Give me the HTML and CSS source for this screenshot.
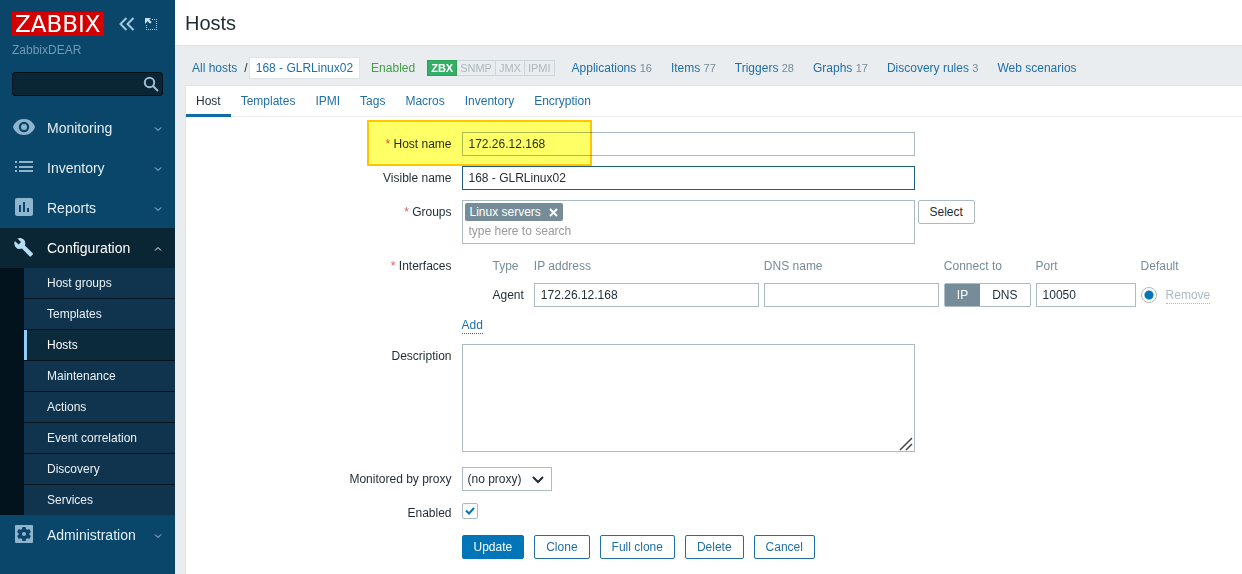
FILE: index.html
```html
<!DOCTYPE html>
<html lang="en">
<head>
    <meta charset="UTF-8">
    <meta name="viewport" content="width=device-width, initial-scale=1.0">
    <title>Configuration of hosts</title>
    <link rel="stylesheet" href="styles.css">
</head>
<body>
    <aside class="sidebar">
        <div class="sidebar-header">
            <a class="logo" href="#">ZABBIX</a>
            <button class="icon-button" type="button" aria-label="Collapse sidebar">
                <svg width="16" height="14" viewBox="0 0 16 14"><path d="M7.500 1L1.500 7l6 6M14.500 1l-6 6 6 6"/></svg>
            </button>
            <button class="icon-button" type="button" aria-label="Hide sidebar">
                <svg width="13" height="13" viewBox="0 0 13 13">
                    <path class="dotted" d="M7 1.500h5.500M11.500 3v9M1.500 7v5.500M3 11.500h8"/>
                    <path class="solid" d="M0 0h6L4.300 1.700l2.400 2.400-1.600 1.600-2.400-2.400L0 6z"/>
                </svg>
            </button>
        </div>
        <div class="server-name">ZabbixDEAR</div>
        <form class="search" role="search">
            <input type="text" id="search" aria-label="Search">
            <button type="button" aria-label="Search">
                <svg width="16" height="16" viewBox="0 0 16 16"><circle cx="6.500" cy="6.500" r="4.700"/><path d="M10 10l5 5"/></svg>
            </button>
        </form>
        <nav class="menu">
            <a class="menu-item" href="#">
                <svg class="menu-icon" viewBox="0 0 24 24"><path fill-rule="evenodd" d="M12 4C6.500 4 2.500 7.500 1 12c1.500 4.500 5.500 8 11 8s9.500-3.500 11-8c-1.500-4.500-5.500-8-11-8zm0 13.200a5.200 5.200 0 1 1 0-10.400 5.200 5.200 0 0 1 0 10.400zm0-8.200a3 3 0 1 0 0 6 3 3 0 0 0 0-6z"/></svg>
                <span>Monitoring</span>
                <svg class="chevron" viewBox="0 0 8 6"><path d="M1 1.500l3 3 3-3"/></svg>
            </a>
            <a class="menu-item" href="#">
                <svg class="menu-icon" viewBox="0 0 24 24"><path d="M3 6h2v2H3zM7 6h14v2H7zM3 11h2v2H3zM7 11h14v2H7zM3 15h2v2H3zM7 15h14v2H7z"/></svg>
                <span>Inventory</span>
                <svg class="chevron" viewBox="0 0 8 6"><path d="M1 1.500l3 3 3-3"/></svg>
            </a>
            <a class="menu-item" href="#">
                <svg class="menu-icon" viewBox="0 0 24 24"><path fill-rule="evenodd" d="M5 3h14a2 2 0 0 1 2 2v14a2 2 0 0 1-2 2H5a2 2 0 0 1-2-2V5a2 2 0 0 1 2-2zm2 7v7h2v-7zm4-3v10h2V7zm4 6v4h2v-4z"/></svg>
                <span>Reports</span>
                <svg class="chevron" viewBox="0 0 8 6"><path d="M1 1.500l3 3 3-3"/></svg>
            </a>
            <a class="menu-item open" href="#">
                <svg class="menu-icon" viewBox="0 0 24 24"><path d="M20.700 18.300l-7.800-7.800c.8-2 .4-4.300-1.200-5.900C10 2.900 7.500 2.600 5.400 3.500L9 7.100 6.600 9.600 2.900 6c-1 2-.6 4.700 1.100 6.400 1.600 1.600 3.900 2 5.900 1.200l7.800 7.800c.3.300.9.300 1.200 0l1.800-1.800c.4-.4.400-1 0-1.300z"/></svg>
                <span>Configuration</span>
                <svg class="chevron" viewBox="0 0 8 6"><path d="M1 4.500l3-3 3 3"/></svg>
            </a>
            <div class="submenu">
                <a href="#">Host groups</a>
                <a href="#">Templates</a>
                <a class="selected" href="#">Hosts</a>
                <a href="#">Maintenance</a>
                <a href="#">Actions</a>
                <a href="#">Event correlation</a>
                <a href="#">Discovery</a>
                <a href="#">Services</a>
            </div>
            <a class="menu-item" href="#">
                <svg class="menu-icon" viewBox="0 0 24 24">
                    <path d="M4 3h16a1 1 0 0 1 1 1v16a1 1 0 0 1-1 1H4a1 1 0 0 1-1-1V4a1 1 0 0 1 1-1z"/>
                    <path class="gear" fill-rule="evenodd" d="M10.400 5h3.200l.4 2 1.300.8 2-.7 1.600 2.800L17.400 11.300v1.400l1.500 1.400-1.600 2.800-2-.7-1.300.8-.4 2h-3.200l-.4-2-1.300-.8-2 .7-1.600-2.800 1.500-1.400v-1.400L5.100 9.900l1.600-2.800 2 .7L10 7zM12 10a2 2 0 1 0 0 4 2 2 0 0 0 0-4z"/>
                </svg>
                <span>Administration</span>
                <svg class="chevron" viewBox="0 0 8 6"><path d="M1 1.500l3 3 3-3"/></svg>
            </a>
        </nav>
    </aside>

    <main class="content">
        <header class="page-header">
            <h1>Hosts</h1>
        </header>

        <div class="object-nav">
            <div class="breadcrumbs">
                <a href="#">All hosts</a>
                <span>/</span>
                <a class="current" href="#">168 - GLRLinux02</a>
            </div>
            <span class="status-enabled">Enabled</span>
            <div class="availability">
                <span class="available">ZBX</span><span>SNMP</span><span>JMX</span><span>IPMI</span>
            </div>
            <div class="object-links">
                <span><a href="#">Applications</a> <sup>16</sup></span>
                <span><a href="#">Items</a> <sup>77</sup></span>
                <span><a href="#">Triggers</a> <sup>28</sup></span>
                <span><a href="#">Graphs</a> <sup>17</sup></span>
                <span><a href="#">Discovery rules</a> <sup>3</sup></span>
                <span><a href="#">Web scenarios</a></span>
            </div>
        </div>

        <section class="card">
            <nav class="tabs">
                <a class="active" href="#">Host</a>
                <a href="#">Templates</a>
                <a href="#">IPMI</a>
                <a href="#">Tags</a>
                <a href="#">Macros</a>
                <a href="#">Inventory</a>
                <a href="#">Encryption</a>
            </nav>

            <form class="host-form">
                <label class="required" for="host">Host name</label>
                <div class="field">
                    <input class="wide" type="text" id="host" value="172.26.12.168">
                    <div class="highlight"></div>
                </div>

                <label for="visiblename">Visible name</label>
                <div class="field">
                    <input class="wide focused" type="text" id="visiblename" value="168 - GLRLinux02">
                </div>

                <label class="required" for="groups">Groups</label>
                <div class="field groups">
                    <div class="multiselect wide">
                        <span class="tag">Linux servers
                            <button type="button" aria-label="Remove Linux servers">
                                <svg width="9" height="9" viewBox="0 0 9 9"><path d="M1 1l7 7M8 1L1 8"/></svg>
                            </button>
                        </span>
                        <input type="text" id="groups" placeholder="type here to search">
                    </div>
                    <button class="btn btn-grey" type="button">Select</button>
                </div>

                <span class="label required">Interfaces</span>
                <div class="field">
                    <table class="interfaces">
                        <thead>
                            <tr>
                                <th>Type</th>
                                <th>IP address</th>
                                <th>DNS name</th>
                                <th>Connect to</th>
                                <th>Port</th>
                                <th colspan="2">Default</th>
                            </tr>
                        </thead>
                        <tbody>
                            <tr>
                                <td class="type">Agent</td>
                                <td><input class="ip" type="text" aria-label="IP address" value="172.26.12.168"></td>
                                <td><input class="dns" type="text" aria-label="DNS name"></td>
                                <td>
                                    <div class="segmented">
                                        <input type="radio" name="useip" id="useip_ip" checked>
                                        <label for="useip_ip">IP</label>
                                        <input type="radio" name="useip" id="useip_dns">
                                        <label for="useip_dns">DNS</label>
                                    </div>
                                </td>
                                <td><input class="port" type="text" aria-label="Port" value="10050"></td>
                                <td><input class="radio" type="radio" name="main" aria-label="Default" checked></td>
                                <td><button class="link disabled" type="button" disabled>Remove</button></td>
                            </tr>
                        </tbody>
                    </table>
                    <div class="add-row"><button class="link" type="button">Add</button></div>
                </div>

                <label for="description">Description</label>
                <div class="field description">
                    <textarea class="wide" id="description"></textarea>
                    <svg class="resizer" width="14" height="14" viewBox="0 0 14 14"><path d="M1 13L13 1M7 13l6-6"/></svg>
                </div>

                <label for="proxy">Monitored by proxy</label>
                <div class="field">
                    <div class="select">
                        <select id="proxy"><option>(no proxy)</option></select>
                        <svg width="12" height="8" viewBox="0 0 12 8"><path d="M1 1l5 5 5-5"/></svg>
                    </div>
                </div>

                <label for="enabled">Enabled</label>
                <div class="field checkbox">
                    <input type="checkbox" id="enabled" checked>
                    <svg width="10" height="8" viewBox="0 0 10 8"><path d="M1 3.500l3 3L9 1"/></svg>
                </div>

                <div class="field actions">
                    <button class="btn btn-primary" type="submit">Update</button>
                    <button class="btn" type="button">Clone</button>
                    <button class="btn" type="button">Full clone</button>
                    <button class="btn" type="button">Delete</button>
                    <button class="btn" type="button">Cancel</button>
                </div>
            </form>
        </section>
    </main>
</body>
</html>
```
FILE: styles.css
```css
* {
    box-sizing: border-box;
}
body {
    margin: 0;
    display: flex;
    min-height: 100vh;
    background-color: #e9edf0;
    color: #1f2c33;
    font-family: Arial, "Liberation Sans", sans-serif;
    font-size: 12px;
    line-height: 18px;
}
a {
    color: #1f6fa5;
    text-decoration: none;
}
input, textarea, select, button {
    font: inherit;
    color: inherit;
    margin: 0;
}
button {
    cursor: pointer;
}
svg {
    display: block;
    fill: none;
}

/* sidebar */
.sidebar {
    flex: 0 0 175px;
    min-width: 0;
    padding-top: 12px;
    background-color: #0a466a;
}
.sidebar-header {
    display: flex;
    align-items: center;
    padding: 0 12px;
}
.logo {
    padding: 0 3px;
    margin-right: 15px;
    background-color: #d40000;
    color: #fff;
    font-family: "DejaVu Sans", sans-serif;
    font-size: 23px;
    line-height: 24px;
}
.icon-button {
    padding: 0;
    margin-right: 10px;
    border: none;
    background: none;
    stroke: #a5c9df;
    stroke-width: 2;
}
.icon-button:last-child {
    margin-right: 0;
}
.icon-button .dotted {
    stroke-width: 1;
    stroke-dasharray: 1 1;
}
.icon-button .solid {
    fill: #c5dfee;
    stroke: none;
}
.server-name {
    padding: 5px 12px 0;
    color: #6d9ab5;
}
.search {
    display: flex;
    height: 24px;
    margin: 13px 12px 12px;
    border: 1px solid #04131d;
    border-radius: 3px;
    background-color: #0a2635;
}
.search input {
    flex: 1;
    min-width: 0;
    border: none;
    background: none;
    color: #fff;
}
.search button {
    padding: 0 3px;
    border: none;
    background: none;
    stroke: #9cbdd1;
    stroke-width: 2;
}
.menu-item {
    display: flex;
    align-items: center;
    height: 40px;
    padding: 0 13px 0 12px;
    color: #e3eef5;
    font-size: 14px;
}
.menu-item span {
    flex: 1;
    margin-left: 11px;
}
.menu-icon {
    width: 24px;
    height: 24px;
    margin-bottom: 2px;
    fill: #8fb5ce;
}
.menu-icon .gear {
    fill: #0a466a;
}
.chevron {
    width: 8px;
    height: 6px;
    margin-top: 2px;
    stroke: #b4d0e1;
}
.menu-item.open {
    background-color: #0a2635;
    color: #fff;
}
.open .menu-icon {
    fill: #b9dcf2;
}
.open .chevron {
    stroke: #fff;
}
.submenu {
    display: grid;
    gap: 1px;
    border-left: 24px solid #03131d;
    background-color: #03131d;
}
.submenu a {
    padding: 6px 0 6px 20px;
    border-left: 3px solid #10344d;
    background-color: #10344d;
    color: #e9f1f6;
}
.submenu .selected {
    border-left-color: #8fcdf8;
    background-color: #0b2b3d;
    color: #fff;
}

/* page */
.content {
    flex: 1;
    min-width: 0;
    display: flex;
    flex-direction: column;
}
.page-header {
    padding: 11px 10px 9px;
    border-bottom: 1px solid #dfe4e7;
    background-color: #fff;
}
h1 {
    margin: 0;
    font-size: 20px;
    font-weight: normal;
    line-height: 25px;
}
.object-nav {
    display: flex;
    align-items: center;
    height: 39px;
    padding: 5px 17px 0;
}
.breadcrumbs {
    display: flex;
    align-items: center;
}
.breadcrumbs span {
    margin: 0 1px 0 7px;
}
.breadcrumbs .current {
    padding: 1px 6px;
    border: 1px solid #dfe4e7;
    background-color: #fff;
}
.status-enabled {
    margin: 0 12px 0 11px;
    color: #429e47;
}
.availability {
    display: flex;
    font-size: 11px;
    line-height: 14px;
}
.availability span {
    padding: 0 3px;
    border: 1px solid #ccd5d9;
    border-left-width: 0;
    color: #acb8be;
}
.availability .available {
    border-color: #2ea155;
    border-left-width: 1px;
    background-color: #34af67;
    color: #fff;
    font-weight: bold;
}
.object-links {
    display: flex;
    gap: 19px;
    margin-left: 17px;
}
.object-links sup {
    color: #768d99;
    font-size: 11px;
    line-height: 14px;
    vertical-align: baseline;
}
.card {
    flex: 1;
    margin-left: 10px;
    border: solid #dfe4e7;
    border-width: 1px 0 0 1px;
    background-color: #fff;
}
.tabs {
    display: flex;
    border-bottom: 1px solid #ebeef0;
}
.tabs a {
    padding: 6px 10px 3px;
    border-bottom: 3px solid transparent;
    margin-bottom: -1px;
    line-height: 19px;
}
.tabs .active {
    border-bottom-color: #0f6ca5;
    color: #1f2c33;
}

/* form */
.host-form {
    display: grid;
    grid-template-columns: 25% 1fr;
    gap: 10px;
    padding: 15px 3px;
}
.host-form > label, .label {
    line-height: 24px;
    text-align: right;
}
.required::before {
    content: "* ";
    color: #e45959;
}
.field {
    position: relative;
}
.field input[type="text"], textarea, select {
    display: block;
    height: 24px;
    padding: 0 6px;
    border: 1px solid #acbbc2;
    border-radius: 0;
    background-color: #fff;
    outline: none;
}
.wide {
    width: 453px;
}
.field input.focused[type="text"] {
    border-color: #1f5d7e;
}
.highlight {
    position: absolute;
    top: -12px;
    left: -95px;
    width: 225px;
    height: 46px;
    border: 2px solid #ffc600;
    background-color: #ffff66;
    mix-blend-mode: multiply;
    pointer-events: none;
}
.groups {
    display: flex;
    align-items: flex-start;
    gap: 3px;
}
.multiselect {
    padding: 2px;
    border: 1px solid #acbbc2;
}
.tag {
    display: inline-flex;
    align-items: center;
    gap: 8px;
    padding: 0 5px;
    border-radius: 2px;
    background-color: #768d99;
    color: #fff;
    vertical-align: top;
}
.tag button {
    padding: 0;
    border: none;
    background: none;
    stroke: #fff;
    stroke-width: 2;
}
.multiselect input[type="text"] {
    width: 100%;
    height: 20px;
    padding: 0 4px;
    border: none;
}
::placeholder {
    color: #999;
}
.btn {
    height: 24px;
    padding: 0 11px;
    border: 1px solid #1f6fa5;
    border-radius: 2px;
    background-color: #fff;
    color: #1f6fa5;
    line-height: 22px;
}
.btn-grey {
    border-color: #acbbc2;
    color: #1f2c33;
}
.btn-primary {
    border-color: #0275b8;
    background-color: #0275b8;
    color: #fff;
}
.interfaces {
    margin-left: 31px;
    border-collapse: collapse;
}
.interfaces th {
    padding: 0 0 5px;
    color: #768d99;
    font-weight: normal;
    line-height: 24px;
    text-align: left;
}
.interfaces td {
    padding: 0 5px 0 0;
}
.interfaces .type {
    padding-right: 10px;
}
.ip {
    width: 225px;
}
.dns {
    width: 175px;
}
.port {
    width: 100px;
}
.segmented {
    display: flex;
    border: 1px solid #acbbc2;
    border-radius: 2px;
}
.segmented input {
    position: absolute;
    opacity: 0;
}
.segmented label {
    padding: 0 12px;
    line-height: 22px;
}
.segmented input:checked + label {
    background-color: #768d99;
    color: #fff;
}
.radio {
    appearance: none;
    display: block;
    width: 16px;
    height: 16px;
    margin-right: 4px;
    border: 1px solid #acbbc2;
    border-radius: 50%;
}
.radio:checked {
    background: radial-gradient(#0275b8 4px, #fff 5px);
}
.link {
    padding: 0;
    border: none;
    border-bottom: 1px dotted #1f6fa5;
    background: none;
    color: #1f6fa5;
    line-height: 15px;
}
.link.disabled {
    border-bottom-color: #acbbc2;
    color: #acbbc2;
}
.add-row {
    height: 18px;
    margin-top: 9px;
}
.description {
    width: 453px;
    margin-bottom: 5px;
}
.description textarea {
    height: 108px;
    resize: vertical;
}
textarea::-webkit-resizer {
    background: transparent;
}
.resizer {
    position: absolute;
    right: 2px;
    bottom: 1px;
    stroke: #444;
    stroke-width: 1.5;
    pointer-events: none;
}
.select {
    position: relative;
    display: inline-block;
    vertical-align: top;
}
.select select {
    appearance: none;
    width: 90px;
    padding: 0 5px;
}
.select svg {
    position: absolute;
    top: 9px;
    right: 8px;
    stroke: #1f2c33;
    stroke-width: 2;
    pointer-events: none;
}
.checkbox {
    padding-top: 2px;
}
.checkbox input {
    appearance: none;
    display: block;
    width: 16px;
    height: 16px;
    border: 1px solid #acbbc2;
    border-radius: 2px;
}
.checkbox svg {
    position: absolute;
    top: 6px;
    left: 3px;
    stroke: #0275b8;
    stroke-width: 2;
    pointer-events: none;
}
.checkbox input:not(:checked) + svg {
    display: none;
}
.actions {
    grid-column: 2;
    display: flex;
    gap: 10px;
}
```
